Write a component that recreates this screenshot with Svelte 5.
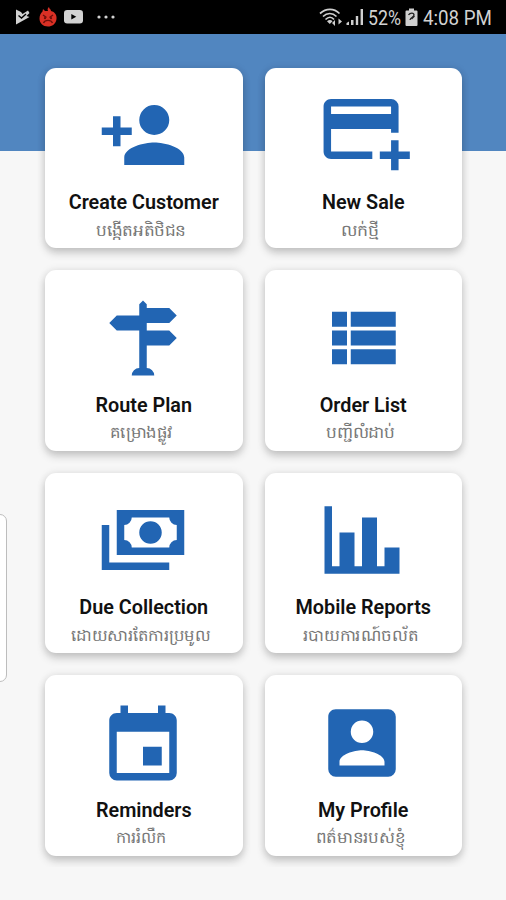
<script lang="ts">
  interface MenuItem {
    title: string;
    khmer: string;
    // width the khmer label takes on the card
    width: number;
    viewBox?: string;
    icon: string;
  }

  const items: MenuItem[] = [
    {
      title: 'Create Customer',
      khmer: 'បង្កើតអតិថិជន',
      width: 90,
      icon: 'M15,14C12.33,14 7,15.33 7,18V20H23V18C23,15.33 17.67,14 15,14M6,10V7H4V10H1V12H4V15H6V12H9V10M15,12A4,4 0 0,0 19,8A4,4 0 0,0 15,4A4,4 0 0,0 11,8A4,4 0 0,0 15,12Z'
    },
    {
      title: 'New Sale',
      khmer: 'លក់ថ្មី',
      width: 38,
      viewBox: '-0.75 1.6 24 24',
      icon: 'M21,18H24V20H21V23H19V20H16V18H19V15H21V18M19,8V6H3V8H19M19,12H3V18H14V20H3C1.89,20 1,19.1 1,18V6C1,4.89 1.89,4 3,4H19A2,2 0 0,1 21,6V13H19V12Z'
    },
    {
      title: 'Route Plan',
      khmer: 'គម្រោងផ្លូវ',
      width: 62,
      icon: 'M11,10H5L3,8L5,6H11V3L12,2L13,3V4H19L21,6L19,8H13V10H19L21,12L19,14H13V20A2,2 0 0,1 15,22H9A2,2 0 0,1 11,20V10Z'
    },
    {
      title: 'Order List',
      khmer: 'បញ្ជីលំដាប់',
      width: 69,
      icon: 'M9,5V9H21V5M9,19H21V15H9M9,14H21V10H9M4,9H8V5H4M4,19H8V15H4M4,14H8V10H4V14Z'
    },
    {
      title: 'Due Collection',
      khmer: 'ដោយសារតែការប្រមូល',
      width: 139,
      viewBox: '0 2 24 24',
      icon: 'M5,6H23V18H5V6M14,9A3,3 0 0,1 17,12A3,3 0 0,1 14,15A3,3 0 0,1 11,12A3,3 0 0,1 14,9M9,8A2,2 0 0,1 7,10V14A2,2 0 0,1 9,16H19A2,2 0 0,1 21,14V10A2,2 0 0,1 19,8H9M1,10H3V20H19V22H1V10Z'
    },
    {
      title: 'Mobile Reports',
      khmer: 'របាយការណ៍ចល័ត',
      width: 115,
      icon: 'M22,21H2V3H4V19H6V10H10V19H12V6H16V19H18V14H22V21Z'
    },
    {
      title: 'Reminders',
      khmer: 'ការរំលឹក',
      width: 50,
      viewBox: '0 -1 24 24',
      icon: 'M19,19H5V8H19M16,1V3H8V1H6V3H5C3.89,3 3,3.89 3,5V19A2,2 0 0,0 5,21H19A2,2 0 0,0 21,19V5C21,3.89 20.1,3 19,3H18V1M17,12H12V17H17V12Z'
    },
    {
      title: 'My Profile',
      khmer: 'ពត៌មានរបស់ខ្ញុំ',
      width: 89,
      icon: 'M6,17C6,15 10,13.9 12,13.9C14,13.9 18,15 18,17V18H6M15,9A3,3 0 0,1 12,12A3,3 0 0,1 9,9A3,3 0 0,1 12,6A3,3 0 0,1 15,9M3,5V19A2,2 0 0,0 5,21H19A2,2 0 0,0 21,19V5A2,2 0 0,0 19,3H5C3.89,3 3,3.9 3,5Z'
    }
  ];
</script>

<div class="screen">
  <header class="status">
    <div class="notifications">
      <svg width="15" height="16" viewBox="0 0 15 16">
        <path d="M1 0.5L6 3L7.5 5L13 1.5L14.5 4L11.5 7L14.5 8L1 15.5Z" fill="#d2d2d2" />
        <path d="M3.5 6.5L6.5 9L11 5" fill="none" stroke="#000" stroke-width="1.4" />
      </svg>
      <svg width="18" height="20" viewBox="0 0 18 20">
        <path d="M9 4C8 2 9 1 10 0C10 2 12 2 12 4C16 5 18 8 17.5 12C17 17 13 19.5 9 19.5C4 19.5 0.5 16 0.5 11.5C0.5 8 2 6 3.5 4.5L4 2L6 4Z" fill="#d93025" />
        <path d="M4 8L7.5 10.5M14 8L10.5 10.5M4.5 16C6 12.5 12 12.5 13.5 16" fill="none" stroke="#6d0f0b" stroke-width="1.4" />
        <circle cx="6" cy="11.2" r="1.1" fill="#6d0f0b" />
        <circle cx="12" cy="11.2" r="1.1" fill="#6d0f0b" />
      </svg>
      <svg class="video" width="19" height="14" viewBox="0 0 19 14">
        <rect width="19" height="13.5" rx="3.2" fill="#d2d2d2" />
        <path d="M7.3 4V9.6L12.3 6.8Z" fill="#000" />
      </svg>
      <svg class="more" width="18" height="4" viewBox="0 0 18 4">
        <circle cx="2" cy="2" r="1.6" fill="#d2d2d2" />
        <circle cx="9" cy="2" r="1.6" fill="#d2d2d2" />
        <circle cx="16" cy="2" r="1.6" fill="#d2d2d2" />
      </svg>
    </div>
    <div class="system">
      <svg width="24" height="19" viewBox="0 0 24 19">
        <g fill="none" stroke="#cfcfcf" stroke-width="1.7">
          <path d="M1 5.5C7 0 15 0 20.5 5.5" />
          <path d="M4 8.5C8 4.5 13.5 4.5 17.5 8.5" />
          <path d="M6.5 11.5C9.5 8.5 12.5 8.5 15 11.5" />
        </g>
        <path d="M8 13.2C10 11.5 12 11.5 13.5 13.2L10.8 16Z" fill="#cfcfcf" />
        <path d="M13 15L16 12V18ZM23 13.5L19.5 10.5V16.5Z" fill="#cfcfcf" />
      </svg>
      <svg width="18" height="18" viewBox="0 0 18 18">
        <path d="M0.5 17V15L3 13.5V17ZM5 12H7.5V17H5ZM9.8 8H12.2V17H9.8ZM14.6 1H17V17H14.6Z" fill="#cfcfcf" />
      </svg>
      <svg class="percent" width="33" height="24">
        <text x="0" y="20" textLength="33" lengthAdjust="spacingAndGlyphs">52%</text>
      </svg>
      <svg class="battery" width="13" height="19" viewBox="0 0 13 19">
        <path d="M4 0.5H9V2.5H11.5Q12.5 2.5 12.5 3.5V17Q12.5 18 11.5 18H1.5Q0.5 18 0.5 17V3.5Q0.5 2.5 1.5 2.5H4Z" fill="#cfcfcf" />
        <path d="M3.5 7C5 4.5 9 4.5 9 7C9 9.5 5.5 9 5 12M6.5 11L9.5 8" fill="none" stroke="#222" stroke-width="1.3" />
      </svg>
      <svg class="clock" width="69" height="24">
        <text x="0" y="20" textLength="69" lengthAdjust="spacingAndGlyphs">4:08 PM</text>
      </svg>
    </div>
  </header>

  <main class="menu">
    {#each items as item}
      <button class="card">
        <svg class="icon" viewBox={item.viewBox ?? '0 0 24 24'}>
          <path d={item.icon} />
        </svg>
        <span class="title">{item.title}</span>
        <svg class="khmer" width={item.width} height="24">
          <text x="0" y="17" textLength={item.width} lengthAdjust="spacingAndGlyphs">{item.khmer}</text>
        </svg>
      </button>
    {/each}
  </main>

  <div class="edge-handle"></div>
</div>

<style>
  :global(body) {
    margin: 0;
    background: #f7f7f7;
  }

  .screen {
    position: relative;
    width: 506px;
    height: 900px;
    overflow: hidden;
    background: linear-gradient(#5186c0 151px, #f7f7f7 151px);
    font-family: Roboto, "Noto Sans", sans-serif;
  }

  .status {
    display: flex;
    justify-content: space-between;
    align-items: center;
    box-sizing: border-box;
    height: 34px;
    padding: 0 14px 0 15px;
    background: #000;
  }

  .notifications,
  .system {
    display: flex;
    align-items: center;
  }
  .notifications { gap: 9px; }
  .notifications .video { margin-left: -2px; }
  .notifications .more { margin-left: 5px; }
  .notifications svg,
  .system svg { display: block; }
  .system { gap: 3px; }

  .percent,
  .clock {
    font-size: 20.5px;
    fill: #d2d2d2;
    overflow: visible;
  }
  .percent { margin-left: 1px; }
  .battery { margin: 0 2px 0 1px; }

  .menu {
    display: grid;
    grid-template-columns: 197.5px 197.5px;
    grid-auto-rows: 180.5px;
    gap: 22px;
    box-sizing: border-box;
    height: 832.5px;
    padding: 33.7px 36px 0 45px;
    overflow: hidden;
  }

  .card {
    display: flex;
    flex-direction: column;
    align-items: center;
    box-sizing: border-box;
    border: 0;
    border-radius: 11px;
    padding: 22.5px 2px 0 0;
    background: #fff;
    box-shadow: 0 5px 9px rgba(0, 0, 0, .19), 0 0 8px rgba(0, 0, 0, .09);
    font-family: inherit;
    cursor: pointer;
  }

  .icon {
    width: 90px;
    height: 90px;
    flex: none;
    overflow: visible;
    fill: #2265b3;
  }

  .title {
    margin: 11.3px 0 0 2px;
    font-size: 19.8px;
    font-weight: 600;
    line-height: 24px;
    color: #111;
    white-space: nowrap;
  }

  .khmer {
    display: block;
    flex: none;
    margin: 3.2px 4px 0 0;
    overflow: visible;
    font-size: 16px;
    fill: #777;
  }

  /* edge panel grip, sits over the left border of the screen */
  .edge-handle {
    position: absolute;
    left: -10px;
    top: 514px;
    box-sizing: border-box;
    width: 17px;
    height: 168px;
    border: 1px solid #bdbdbd;
    border-radius: 7px;
    background: #fff;
  }
</style>
